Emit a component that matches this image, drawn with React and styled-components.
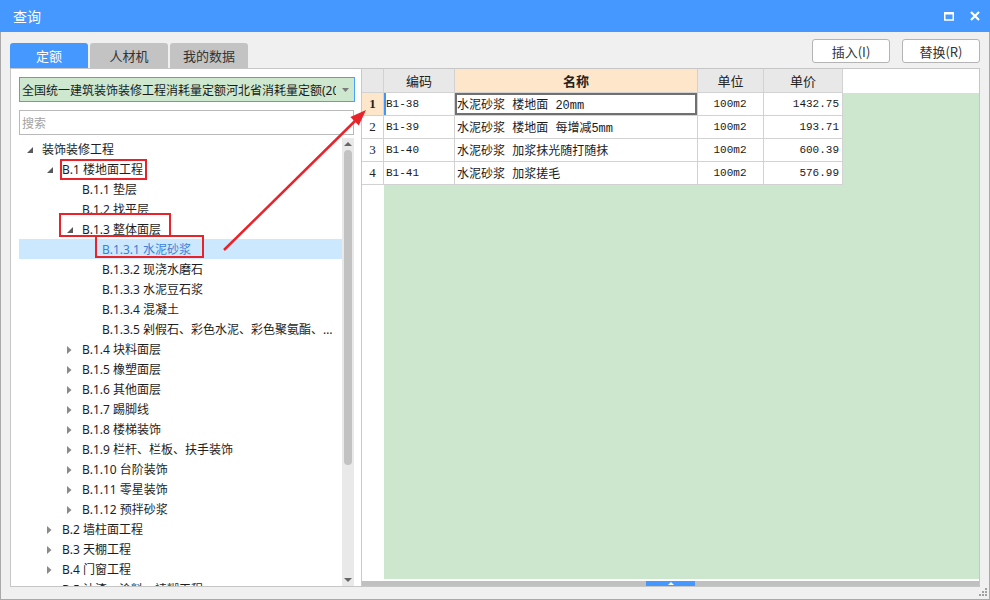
import React from 'react';
import styled, { createGlobalStyle } from 'styled-components';

const GlobalStyle = createGlobalStyle`
  html, body { margin: 0; padding: 0; background: #fff; }
  body { font-family: "Noto Sans", "Noto Sans CJK SC", sans-serif; }
  * { box-sizing: border-box; }
`;

const Window = styled.div`
  position: relative;
  width: 990px;
  height: 600px;
  display: flex;
  flex-direction: column;
  background: #f0f0f0;
  overflow: hidden;
`;

const TitleBar = styled.div`
  flex: none;
  height: 32px;
  display: flex;
  align-items: center;
  justify-content: space-between;
  padding: 0 10px 0 13px;
  background: #4598ff;
  color: #fff;
`;

const Title = styled.div`
  font-family: "Noto Sans CJK SC", sans-serif;
  font-size: 14px;
`;

const WinButtons = styled.div`
  display: flex;
  align-items: center;
  gap: 16px;
`;

const Body = styled.div`
  flex: 1;
  min-height: 0;
  display: flex;
  flex-direction: column;
  padding: 0 9px 12px;
  border: 1px solid #a9a9a9;
  border-top: none;
`;

const Toolbar = styled.div`
  flex: none;
  height: 36px;
  display: flex;
  justify-content: space-between;
`;

const Tabs = styled.div`
  align-self: flex-end;
  display: flex;
  gap: 2px;
`;

const Tab = styled.div`
  width: 78px;
  height: 25px;
  display: flex;
  align-items: center;
  justify-content: center;
  border-radius: 3px 3px 0 0;
  font-family: "Noto Sans CJK SC", sans-serif;
  font-size: 13px;
  background: ${p => (p.active ? '#4598ff' : '#c3c3c3')};
  color: ${p => (p.active ? '#fff' : '#333')};
`;

const Actions = styled.div`
  margin-top: 7px;
  display: flex;
  gap: 12px;
`;

const Button = styled.div`
  width: 78px;
  height: 24px;
  display: flex;
  align-items: center;
  justify-content: center;
  border: 1px solid #b4b4b4;
  border-radius: 3px;
  background: #fff;
  font-family: "Noto Sans CJK SC", sans-serif;
  font-size: 13px;
  color: #333;
`;

const Content = styled.div`
  flex: none;
  height: 519px;
  display: flex;
  background: #fff;
  border: 1px solid #c6c6c6;
`;

const LeftPanel = styled.div`
  flex: none;
  width: 351px;
  display: flex;
  flex-direction: column;
  padding: 8px 7px 0 8px;
  border-right: 1px solid #c9c9c9;
`;

const Dropdown = styled.div`
  flex: none;
  height: 25px;
  margin-right: -1px;
  display: flex;
  align-items: center;
  border: 1px solid #4aa0ff;
  background: #cde8cf;
`;

const DropdownText = styled.div`
  flex: 1;
  min-width: 0;
  overflow: hidden;
  white-space: nowrap;
  padding-left: 2px;
  font-family: "Noto Sans", "Noto Sans CJK SC", sans-serif;
  font-size: 12px;
  color: #1a1a1a;
`;

const DropdownArrow = styled.div`
  flex: none;
  width: 18px;
  display: flex;
  justify-content: center;
`;

const Search = styled.div`
  flex: none;
  height: 25px;
  margin-top: 8px;
  display: flex;
  align-items: center;
  padding-left: 2px;
  border: 1px solid #b9b9b9;
  font-family: "Noto Sans CJK SC", sans-serif;
  font-size: 12px;
  color: #a3a3a3;
`;

const TreeArea = styled.div`
  flex: 1;
  min-height: 0;
  margin-top: 3px;
  display: flex;
`;

const TreeList = styled.div`
  flex: 1;
  min-width: 0;
  overflow: hidden;
  padding-top: 1px;
`;

const TreeRow = styled.div`
  height: 20px;
  display: flex;
  align-items: center;
  padding-left: ${p => 8 + p.level * 20}px;
  background: ${p => (p.selected ? '#cce8ff' : 'transparent')};
  color: ${p => (p.selected ? '#3d7fd6' : '#1e1e1e')};
`;

const Toggle = styled.span`
  flex: none;
  width: 15px;
  height: 20px;
  display: flex;
  align-items: center;
  padding-top: 2px;
`;

const Label = styled.span`
  flex: 1;
  min-width: 0;
  height: 20px;
  overflow: hidden;
  white-space: nowrap;
  text-overflow: ellipsis;
  padding-top: 2px;
  font-family: "Noto Sans", "Noto Sans CJK SC", sans-serif;
  font-size: 12px;
  line-height: 18px;
`;

const VScroll = styled.div`
  flex: none;
  width: 12px;
  display: flex;
  flex-direction: column;
  background: #e9e9e9;
`;

const ScrollArrow = styled.div`
  flex: none;
  height: 12px;
  display: flex;
  align-items: center;
  justify-content: center;
`;

const VThumb = styled.div`
  width: 8px;
  height: 315px;
  margin: 0 2px;
  border-radius: 4px;
  background: #c2c2c2;
`;

const VTrack = styled.div`
  flex: 1;
`;

const RightPanel = styled.div`
  flex: 1;
  min-width: 0;
  display: flex;
  flex-direction: column;
  background: #fff;
`;

const Grid = styled.div`
  flex: 1;
  min-height: 0;
  display: flex;
  flex-direction: column;
`;

const HeaderRow = styled.div`
  flex: none;
  height: 24px;
  display: flex;
`;

const HeadCell = styled.div`
  flex: none;
  width: ${p => p.w}px;
  height: 24px;
  display: flex;
  align-items: center;
  justify-content: center;
  border-right: 1px solid #d2d2d2;
  border-bottom: 1px solid #d2d2d2;
  background: ${p => (p.hot ? '#fde6c9' : '#e8e8e8')};
  font-family: "Noto Sans CJK SC", sans-serif;
  font-size: 13px;
  font-weight: ${p => (p.hot ? 700 : 400)};
  color: #222;
`;

const GridBody = styled.div`
  flex: 1;
  min-height: 0;
  display: flex;
`;

const RowHeads = styled.div`
  flex: none;
  width: 22px;
`;

const RowHead = styled.div`
  height: 23px;
  display: flex;
  align-items: center;
  justify-content: center;
  border-right: 1px solid #d2d2d2;
  border-bottom: 1px solid #d2d2d2;
  background: ${p => (p.current ? '#fde6c9' : '#fff')};
  font-family: "Liberation Serif", serif;
  font-size: 13px;
  font-weight: ${p => (p.current ? 700 : 400)};
  color: #222;
`;

const DataArea = styled.div`
  flex: 1;
  background: #cde7cf;
`;

const DataRow = styled.div`
  width: 459px;
  height: 23px;
  display: flex;
  background: #fff;
`;

const Cell = styled.div`
  flex: none;
  width: ${p => p.w}px;
  height: 23px;
  display: flex;
  align-items: center;
  justify-content: ${p => p.align || 'flex-start'};
  padding: 0 3px 0 2px;
  border-right: 1px solid #d2d2d2;
  border-bottom: 1px solid #d2d2d2;
  white-space: pre;
  overflow: hidden;
  font-family: "Liberation Mono", "Noto Sans CJK SC", monospace;
  font-size: ${p => (p.cjk ? '12px' : '11px')};
  color: #1a1a1a;
  box-shadow: ${p => (p.focus ? 'inset 0 0 0 2px #707070' : p.marker ? 'inset 2px 0 0 #3d96ff' : 'none')};
`;

const HScroll = styled.div`
  flex: none;
  height: 5px;
  margin-top: 2px;
  display: flex;
  background: #c0c0c0;
`;

const HThumb = styled.div`
  width: 49px;
  margin-left: 284px;
  display: flex;
  align-items: center;
  justify-content: center;
  background: #4598ff;
`;

const RedBox = styled.div`
  position: absolute;
  border: 2px solid #e8232a;
  pointer-events: none;
`;

const Overlay = styled.svg`
  position: absolute;
  left: 0;
  top: 0;
  pointer-events: none;
`;

const Grip = styled.svg`
  position: absolute;
  right: 2px;
  bottom: 3px;
`;

const tree = [
  { level: 0, toggle: 'open', label: '装饰装修工程' },
  { level: 1, toggle: 'open', label: 'B.1 楼地面工程' },
  { level: 2, label: 'B.1.1 垫层' },
  { level: 2, label: 'B.1.2 找平层' },
  { level: 2, toggle: 'open', label: 'B.1.3 整体面层' },
  { level: 3, label: 'B.1.3.1 水泥砂浆', selected: true },
  { level: 3, label: 'B.1.3.2 现浇水磨石' },
  { level: 3, label: 'B.1.3.3 水泥豆石浆' },
  { level: 3, label: 'B.1.3.4 混凝土' },
  { level: 3, label: 'B.1.3.5 剁假石、彩色水泥、彩色聚氨酯、环氧自流平' },
  { level: 2, toggle: 'closed', label: 'B.1.4 块料面层' },
  { level: 2, toggle: 'closed', label: 'B.1.5 橡塑面层' },
  { level: 2, toggle: 'closed', label: 'B.1.6 其他面层' },
  { level: 2, toggle: 'closed', label: 'B.1.7 踢脚线' },
  { level: 2, toggle: 'closed', label: 'B.1.8 楼梯装饰' },
  { level: 2, toggle: 'closed', label: 'B.1.9 栏杆、栏板、扶手装饰' },
  { level: 2, toggle: 'closed', label: 'B.1.10 台阶装饰' },
  { level: 2, toggle: 'closed', label: 'B.1.11 零星装饰' },
  { level: 2, toggle: 'closed', label: 'B.1.12 预拌砂浆' },
  { level: 1, toggle: 'closed', label: 'B.2 墙柱面工程' },
  { level: 1, toggle: 'closed', label: 'B.3 天棚工程' },
  { level: 1, toggle: 'closed', label: 'B.4 门窗工程' },
  { level: 1, toggle: 'closed', label: 'B.5 油漆、涂料、裱糊工程' },
];

const columns = [
  { key: 'code', title: '编码', w: 71 },
  { key: 'name', title: '名称', w: 243, hot: true },
  { key: 'unit', title: '单位', w: 66 },
  { key: 'price', title: '单价', w: 79 },
];

const rows = [
  { code: 'B1-38', name: '水泥砂浆 楼地面 20mm', unit: '100m2', price: '1432.75' },
  { code: 'B1-39', name: '水泥砂浆 楼地面 每增减5mm', unit: '100m2', price: '193.71' },
  { code: 'B1-40', name: '水泥砂浆 加浆抹光随打随抹', unit: '100m2', price: '600.39' },
  { code: 'B1-41', name: '水泥砂浆 加浆搓毛', unit: '100m2', price: '576.99' },
];

function ToggleIcon({ type }) {
  if (type === 'open') {
    return (
      <svg width="6" height="6" viewBox="0 0 6 6">
        <path d="M6 0 L6 6 L0 6 Z" fill="#5a5a5a" />
      </svg>
    );
  }
  if (type === 'closed') {
    return (
      <svg width="5" height="8" viewBox="0 0 5 8">
        <path d="M0 0 L4.5 4 L0 8 Z" fill="#8a8a8a" />
      </svg>
    );
  }
  return null;
}

function App() {
  // arrow from the selected tree node to the first result row
  const tip = [366, 110];
  const head = [[358.8, 125.5], [350.4, 116.9]];

  return (
    <Window>
      <GlobalStyle />
      <TitleBar>
        <Title>查询</Title>
        <WinButtons>
          <svg width="10" height="9" viewBox="0 0 10 9">
            <rect x="0.75" y="1" width="8.5" height="7" fill="none" stroke="#fff" strokeWidth="1.5" />
            <rect x="0" y="0" width="10" height="2.5" fill="#fff" />
          </svg>
          <svg width="10" height="10" viewBox="0 0 10 10">
            <path d="M1 1 L9 9 M9 1 L1 9" stroke="#fff" strokeWidth="2.2" />
          </svg>
        </WinButtons>
      </TitleBar>

      <Body>
        <Toolbar>
          <Tabs>
            <Tab active>定额</Tab>
            <Tab>人材机</Tab>
            <Tab>我的数据</Tab>
          </Tabs>
          <Actions>
            <Button>插入(I)</Button>
            <Button>替换(R)</Button>
          </Actions>
        </Toolbar>

        <Content>
          <LeftPanel>
            <Dropdown>
              <DropdownText>全国统一建筑装饰装修工程消耗量定额河北省消耗量定额(2012)</DropdownText>
              <DropdownArrow>
                <svg width="7" height="4" viewBox="0 0 7 4">
                  <path d="M0 0 L7 0 L3.5 4 Z" fill="#7a7a7a" />
                </svg>
              </DropdownArrow>
            </Dropdown>
            <Search>搜索</Search>
            <TreeArea>
              <TreeList>
                {tree.map((n, i) => (
                  <TreeRow key={i} level={n.level} selected={n.selected}>
                    <Toggle>
                      <ToggleIcon type={n.toggle} />
                    </Toggle>
                    <Label>{n.label}</Label>
                  </TreeRow>
                ))}
              </TreeList>
              <VScroll>
                <ScrollArrow>
                  <svg width="8" height="4" viewBox="0 0 8 4">
                    <path d="M0 4 L4 0 L8 4 Z" fill="#666" />
                  </svg>
                </ScrollArrow>
                <VThumb />
                <VTrack />
                <ScrollArrow>
                  <svg width="8" height="4" viewBox="0 0 8 4">
                    <path d="M0 0 L8 0 L4 4 Z" fill="#666" />
                  </svg>
                </ScrollArrow>
              </VScroll>
            </TreeArea>
          </LeftPanel>

          <RightPanel>
            <Grid>
              <HeaderRow>
                <HeadCell w={22} />
                {columns.map(c => (
                  <HeadCell key={c.key} w={c.w} hot={c.hot}>{c.title}</HeadCell>
                ))}
              </HeaderRow>
              <GridBody>
                <RowHeads>
                  {rows.map((r, i) => (
                    <RowHead key={r.code} current={i === 0}>{i + 1}</RowHead>
                  ))}
                </RowHeads>
                <DataArea>
                  {rows.map((r, i) => (
                    <DataRow key={r.code}>
                      <Cell w={71} marker={i === 0}>{r.code}</Cell>
                      <Cell w={243} cjk focus={i === 0}>{r.name}</Cell>
                      <Cell w={66} align="center">{r.unit}</Cell>
                      <Cell w={79} align="flex-end">{r.price}</Cell>
                    </DataRow>
                  ))}
                </DataArea>
              </GridBody>
            </Grid>
            <HScroll>
              <HThumb>
                <svg width="6" height="3" viewBox="0 0 6 3">
                  <path d="M0 3 L3 0 L6 3 Z" fill="#fff" />
                </svg>
              </HThumb>
            </HScroll>
          </RightPanel>
        </Content>
      </Body>

      <RedBox style={{ left: 60, top: 159, width: 87, height: 21 }} />
      <RedBox style={{ left: 59, top: 213, width: 112, height: 24 }} />
      <RedBox style={{ left: 95, top: 235, width: 109, height: 23 }} />
      <Overlay width="990" height="600" viewBox="0 0 990 600">
        <line x1="224" y1="250" x2="355" y2="121" stroke="#e8232a" strokeWidth="2.5" />
        <polygon
          points={`${tip[0]},${tip[1]} ${head[0][0]},${head[0][1]} ${head[1][0]},${head[1][1]}`}
          fill="#e8232a"
        />
      </Overlay>

      <Grip width="10" height="10" viewBox="0 0 10 10">
        <rect x="7" y="1" width="2" height="2" fill="#a0a0a0" />
        <rect x="4" y="4" width="2" height="2" fill="#a0a0a0" />
        <rect x="7" y="4" width="2" height="2" fill="#a0a0a0" />
        <rect x="1" y="7" width="2" height="2" fill="#a0a0a0" />
        <rect x="4" y="7" width="2" height="2" fill="#a0a0a0" />
        <rect x="7" y="7" width="2" height="2" fill="#a0a0a0" />
      </Grip>
    </Window>
  );
}

export default App;
